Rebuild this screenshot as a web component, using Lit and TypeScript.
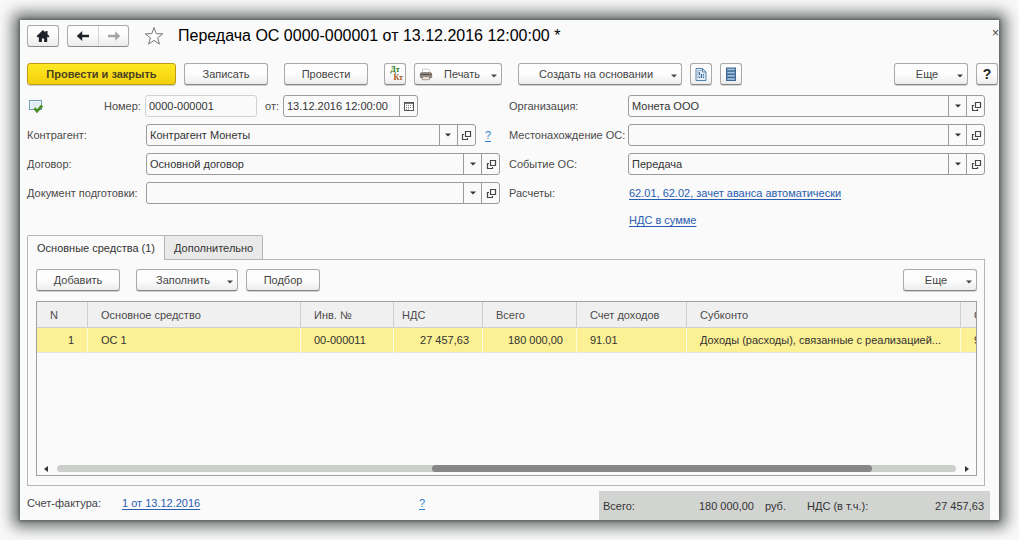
import { LitElement, html, css, svg, nothing } from "lit";
import { customElement, property } from "lit/decorators.js";

const caret = html`<svg class="caret" viewBox="0 0 6 4" width="6" height="4" aria-hidden="true"><path d="M0 .5h6L3 3.5z" fill="currentColor"/></svg>`;

const icons = {
  home: svg`<path d="M8 2 1.500 8.200 2.800 9.500l1-.8V14h3.100v-3.600h2.200V14h3.100V8.700l1 .8 1.300-1.300-2-2V3h-2v1.500z" fill="#1f2229"/>`,
  back: svg`<path d="M1.800 8l5.400-5v3.700H14v2.600H7.200V13z" fill="#1f2229"/>`,
  forward: svg`<path d="M14.200 8 9.200 3.200v3.600H2v2.400h7.200v3.600z" fill="#a5a5a5"/>`,
  printer: svg`<path d="M4 7V2.500h7l1.500 1.500V7z" fill="#fff" stroke="#a9b6c2" stroke-width=".8"/><rect x="1.500" y="6.500" width="13" height="6" rx="1.500" fill="#8f8a88" stroke="#625d5b" stroke-width=".8"/><path d="M2 8.500h12" stroke="#4a4545"/><path d="M4 11h8v3.500H4z" fill="#eee3d6" stroke="#8b7d72" stroke-width=".8"/><path d="M11.500 7.600h2" stroke="#e98a3a"/>`,
  report: svg`<path d="M3 2.500h6.500L13 6v8.500H3z" fill="#e6eff7" stroke="#5583ab"/><path d="M5 12.500V4.500h4" fill="none" stroke="#8fb0cc"/><path d="M9.500 2.500V6H13" fill="none" stroke="#5583ab"/><path d="M6.500 6v3m0 1.500v1.500M8.500 8v4m2-4v1.500m0 1v1.500" stroke="#3d6c98" stroke-width="1.200"/>`,
  list: svg`<rect x="3.500" y="2" width="9" height="12.500" fill="#7fa7cd" stroke="#3f6890"/><path d="M4 5h8M4 8.200h8M4 11.400h8" stroke="#2f567c"/><path d="M5 3.500h6M5 6.600h6M5 9.800h6M5 13h6" stroke="#a9c8e4"/>`,
  calendar: svg`<rect x="3.500" y="4.500" width="9" height="8" fill="#fff" stroke="#555"/><path d="M4 5.500h8" stroke="#777"/><path d="M5 7.500h6.500M5 9.500h6.500M5 11.200h4" stroke="#777" stroke-dasharray="1 1"/>`,
  open: svg`<path d="M7.500 4.500h5v5h-5z" fill="none" stroke="#444" stroke-width="1.200"/><path d="M6 7.500H4.500v5H9.500v-1.500" fill="none" stroke="#444" stroke-width="1.200"/>`,
  posted: svg`<rect x="1.500" y="2.500" width="12" height="9" fill="#f3f9fc" stroke="#6d9fb8"/><path d="M3 5h9M3 7h9M3 9h5" stroke="#c3dae6" stroke-width=".8"/><path d="M6.500 10.200 9 13.200l5.200-5.700" fill="none" stroke="#4a8c28" stroke-width="2.600"/>`,
  star: svg`<path d="M8 1.200l1.750 4.950 5.250.1-4.150 3.200 1.500 5L8 11.500l-4.350 2.950 1.500-5L1 6.250l5.250-.1z" fill="#fff" stroke="#777" stroke-width=".8"/>`,
};

const icon = (name: keyof typeof icons, size = 16) =>
  html`<svg viewBox="0 0 16 16" width=${size} height=${size} aria-hidden="true">${icons[name]}</svg>`;

const controls = css`
  * { box-sizing: border-box; }
  svg { display: block; flex: none; }
  button, input { font: inherit; color: inherit; margin: 0; }
  a { color: #2a5db0; text-underline-offset: 2px; }
`;

@customElement("tool-button")
class ToolButton extends LitElement {
  @property() label = "";
  @property({ type: Boolean }) menu = false;
  @property({ type: Boolean }) primary = false;
  @property({ type: Boolean }) square = false;

  static styles = [controls, css`
    :host { display: block; }
    button {
      display: flex; align-items: center; justify-content: center; gap: 2px;
      height: 22px; width: 100%; padding: 0 4px;
      border: 1px solid #a9a9a9; border-bottom-color: #858585; border-radius: 3px;
      background: linear-gradient(#fdfdfd 50%, #ececec);
      box-shadow: 0 1px 0 #d0d0d0; color: #444; white-space: nowrap;
    }
    .text { flex: 1; text-align: center; }
    .primary { background: linear-gradient(#ffe924, #f2d00c); border-color: #bb9d12; color: #4a4220; font-weight: bold; }
    .square { padding: 0; }
    .caret { margin-top: 3px; }
  `];

  render() {
    return html`<button class="${this.primary ? "primary" : ""} ${this.square ? "square" : ""}" aria-label=${this.label || nothing}>
      <slot name="icon"></slot>
      ${this.square ? html`<slot></slot>` : html`<span class="text"><slot></slot></span>`}
      ${this.menu ? caret : nothing}
    </button>`;
  }
}

@customElement("ref-field")
class RefField extends LitElement {
  @property() label = "";
  @property() value = "";
  @property() kind: "ref" | "date" | "plain" = "ref";
  @property({ type: Boolean }) fit = false;

  static styles = [controls, css`
    :host { display: flex; align-items: center; min-width: 0; color: #333; }
    label { flex: none; width: 119px; color: #4a4a4a; white-space: nowrap; }
    .short { width: auto; margin-right: 4px; }
    .box {
      display: flex; flex: 1; min-width: 0; height: 22px;
      border: 1px solid #9c9c9c; border-radius: 3px; overflow: hidden; background: #fafafa;
    }
    .plain { border-color: #d2d2d2; }
    input { flex: 1; min-width: 0; width: 0; border: 0; padding: 0 3px; background: none; outline: none; }
    button {
      display: flex; align-items: center; justify-content: center;
      width: 18px; padding: 0; border: 0; border-left: 1px solid #9c9c9c; background: none;
    }
  `];

  render() {
    return html`
      <label for="value" class=${this.fit ? "short" : ""}>${this.label}</label>
      <div class="box ${this.kind}">
        <input id="value" .value=${this.value} ?readonly=${this.kind === "plain"} />
        ${this.kind === "ref" ? html`
          <button aria-label="Выбрать">${caret}</button>
          <button aria-label="Открыть">${icon("open")}</button>` : nothing}
        ${this.kind === "date" ? html`<button aria-label="Календарь">${icon("calendar")}</button>` : nothing}
      </div>`;
  }
}

interface Column { title: string; width: number; value: string; cls?: string }

const columns: Column[] = [
  { title: "N", width: 51, value: "1", cls: "num" },
  { title: "Основное средство", width: 213, value: "ОС 1" },
  { title: "Инв. №", width: 93, value: "00-000011" },
  { title: "НДС", width: 89, value: "27 457,63", cls: "num tight" },
  { title: "Всего", width: 94, value: "180 000,00", cls: "num" },
  { title: "Счет доходов", width: 110, value: "91.01" },
  { title: "Субконто", width: 274, value: "Доходы (расходы), связанные с реализацией..." },
  { title: "Счет расходов", width: 111, value: "91.02" },
];

@customElement("asset-table")
class AssetTable extends LitElement {
  static styles = [controls, css`
    :host { display: flex; flex-direction: column; flex: 1; border: 1px solid #a0a0a0; min-width: 0; }
    .view { flex: 1; overflow: hidden; }
    table { width: 100%; border-collapse: separate; border-spacing: 0; table-layout: fixed; }
    th, td { padding: 0 13px; text-align: left; white-space: nowrap; border-right: 1px solid #cfcfcf; }
    th { height: 26px; font-weight: normal; color: #4a4a4a; background: #f0f0f0; border-bottom: 1px solid #cfcfcf; }
    td { height: 25px; color: #333; background: #fbf094; border-right-color: #fffbe0; border-bottom: 1px solid #e4e4e4; }
    td.num { text-align: right; }
    th.tight { padding-left: 8px; }
    .scroll { display: flex; align-items: center; gap: 9px; padding: 0 7px 2px; height: 11px; }
    .scroll button { display: flex; border: 0; padding: 0; background: none; width: 4px; }
    .track { flex: 1; height: 7px; border-radius: 4px; background: #cdcfcd; }
    .thumb { width: 49%; height: 7px; margin-left: 41.7%; border-radius: 4px; background: #868786; }
  `];

  render() {
    return html`
      <div class="view">
        <table>
          <colgroup>${columns.map(c => html`<col style="width:${c.width}px">`)}</colgroup>
          <thead><tr>${columns.map(c => html`<th scope="col" class=${c.cls ?? ""}>${c.title}</th>`)}</tr></thead>
          <tbody><tr>${columns.map(c => html`<td class=${c.cls ?? ""}>${c.value}</td>`)}</tr></tbody>
        </table>
      </div>
      <div class="scroll">
        <button aria-label="Влево"><svg viewBox="0 0 4 6" width="4" height="6"><path d="M4 0v6L0 3z" fill="#333"/></svg></button>
        <div class="track"><div class="thumb"></div></div>
        <button aria-label="Вправо"><svg viewBox="0 0 4 6" width="4" height="6"><path d="M0 0v6l4-3z" fill="#333"/></svg></button>
      </div>`;
  }
}

@customElement("app-root")
class AppRoot extends LitElement {
  static styles = [controls, css`
    :host {
      display: flex; min-height: 100vh; padding: 20px; background: #fafafa; box-sizing: border-box;
      font: 11px/14px "Liberation Sans", Arial, sans-serif; color: #444;
    }
    .window {
      flex: 1; min-width: 0; display: flex; flex-direction: column; padding: 5px 0 0 7px; background: #fafafa;
      box-shadow: 0 0 3px 1px rgba(70, 76, 74, .7), 0 0 14px 7px rgba(70, 76, 74, .8);
    }
    .head { display: flex; align-items: center; height: 22px; gap: 8px; }
    .frame {
      display: flex; height: 22px; border: 1px solid #a9a9a9; border-bottom-color: #858585; border-radius: 3px;
      background: linear-gradient(#fdfdfd 40%, #ececec);
    }
    .frame button { display: flex; align-items: center; justify-content: center; width: 30px; padding: 0; border: 0; background: none; }
    .frame button + button { border-left: 1px solid #d4d4d4; }
    .fav { display: flex; border: 0; padding: 0; background: none; margin: 0 6px 0 7px; }
    h1 { flex: 1; margin: 0; font-size: 16px; line-height: 22px; font-weight: normal; color: #000; white-space: nowrap; }
    .close { align-self: flex-start; border: 0; padding: 0; background: none; line-height: 16px; font-size: 12px; }
    .bar { display: flex; align-items: center; gap: 8px; }
    .main { margin-top: 16px; padding-right: 1px; }
    .gap { margin-left: 8px; }
    .end { margin-left: auto; }
    .w-wide { width: 164px; }
    .w-primary { width: 149px; }
    .w-m { width: 84px; }
    .w-print { width: 88px; }
    .w-fill { width: 102px; }
    .w-s { width: 74px; }
    .w-i { width: 22px; }
    .dtkt { display: flex; flex-direction: column; width: 16px; font: bold 8px/8px "Liberation Serif", "Times New Roman", serif; }
    .dt { color: #2c7a1d; }
    .kt { color: #a8581c; text-align: right; }
    .q { font-size: 14px; font-weight: bold; color: #222; }
    .form { display: grid; grid-template-columns: 473fr 476fr; gap: 9px; margin: 10px 14px 0 0; }
    .col { display: flex; flex-direction: column; gap: 7px; min-width: 0; }
    .row { display: flex; align-items: center; height: 22px; }
    .row ref-field { flex: 1; }
    .state { width: 77px; padding-left: 1px; }
    .row .number { flex: none; width: 153px; }
    .row .date { flex: none; width: 153px; margin-left: 8px; }
    .hint { margin: 0 9px; color: #2f7fd0; }
    .caption { width: 120px; color: #4a4a4a; }
    .links { margin-top: -2px; padding-left: 120px; }
    .tabs { display: flex; margin-top: 4px; }
    .tab { height: 25px; padding: 0 9px; border: 1px solid #b5b5b5; border-bottom: 0; background: #e9e9e9; color: #333; }
    .tab + .tab { border-left: 0; border-bottom: 1px solid #b5b5b5; border-radius: 0 2px 0 0; }
    .active { background: #fafafa; border-radius: 2px 0 0 0; }
    .rest { flex: 1; border-bottom: 1px solid #b5b5b5; margin-right: 14px; }
    .panel {
      flex: 1; display: flex; flex-direction: column; gap: 10px; min-width: 0;
      margin-right: 14px; padding: 9px 7px 9px 8px; border: 1px solid #b5b5b5; border-top: 0;
    }
    .foot { display: flex; align-items: center; margin-top: 5px; padding-right: 9px; height: 29px; }
    .invoice { width: 95px; }
    .invoice-link { width: 297px; }
    .foot-left { display: flex; flex: 1; align-self: flex-start; padding-top: 5px; }
    .foot-left .hint { margin: 0; }
    .totals { display: flex; align-items: center; width: 391px; height: 29px; padding: 0 6px 0 4px; background: #d2d4d2; color: #333; }
    .pair { display: flex; justify-content: space-between; width: 151px; }
    .unit { width: 53px; padding-left: 11px; }
    .rest-pair { flex: 1; }
  `];

  render() {
    return html`
      <main class="window">
        <header class="head">
          <div class="frame"><button aria-label="Домой">${icon("home")}</button></div>
          <div class="frame"><button aria-label="Назад">${icon("back")}</button><button aria-label="Вперед" disabled>${icon("forward")}</button></div>
          <button class="fav" aria-label="В избранное">${icon("star", 20)}</button>
          <h1>Передача ОС 0000-000001 от 13.12.2016 12:00:00 *</h1>
          <button class="close" aria-label="Закрыть">×</button>
        </header>

        <div class="bar main">
          <tool-button class="w-primary" primary>Провести и закрыть</tool-button>
          <tool-button class="w-m">Записать</tool-button>
          <tool-button class="w-m gap">Провести</tool-button>
          <tool-button class="w-i gap" square><span class="dtkt"><span class="dt">Дт</span><span class="kt">Кт</span></span></tool-button>
          <tool-button class="w-print" menu><span slot="icon">${icon("printer", 14)}</span>Печать</tool-button>
          <tool-button class="w-wide gap" menu>Создать на основании</tool-button>
          <tool-button class="w-i" square label="Отчет">${icon("report")}</tool-button>
          <tool-button class="w-i" square label="Список">${icon("list")}</tool-button>
          <tool-button class="w-s end" menu>Еще</tool-button>
          <tool-button class="w-i" square><span class="q">?</span></tool-button>
        </div>

        <section class="form">
          <div class="col">
            <div class="row">
              <span class="state">${icon("posted")}</span>
              <ref-field class="number" fit kind="plain" label="Номер:" value="0000-000001"></ref-field>
              <ref-field class="date" fit kind="date" label="от:" value="13.12.2016 12:00:00"></ref-field>
            </div>
            <div class="row">
              <ref-field label="Контрагент:" value="Контрагент Монеты"></ref-field>
              <a class="hint" href="#">?</a>
            </div>
            <div class="row"><ref-field label="Договор:" value="Основной договор"></ref-field></div>
            <div class="row"><ref-field label="Документ подготовки:"></ref-field></div>
          </div>
          <div class="col">
            <div class="row"><ref-field label="Организация:" value="Монета ООО"></ref-field></div>
            <div class="row"><ref-field label="Местонахождение ОС:"></ref-field></div>
            <div class="row"><ref-field label="Событие ОС:" value="Передача"></ref-field></div>
            <div class="row"><span class="caption">Расчеты:</span><a href="#">62.01, 62.02, зачет аванса автоматически</a></div>
            <div class="row links"><a href="#">НДС в сумме</a></div>
          </div>
        </section>

        <div class="tabs" role="tablist">
          <button class="tab active" role="tab" aria-selected="true">Основные средства (1)</button>
          <button class="tab" role="tab" aria-selected="false">Дополнительно</button>
          <span class="rest"></span>
        </div>
        <section class="panel">
          <div class="bar">
            <tool-button class="w-m">Добавить</tool-button>
            <tool-button class="w-fill gap" menu>Заполнить</tool-button>
            <tool-button class="w-s">Подбор</tool-button>
            <tool-button class="w-s end" menu>Еще</tool-button>
          </div>
          <asset-table></asset-table>
        </section>

        <footer class="foot">
          <div class="foot-left">
            <span class="invoice">Счет-фактура:</span>
            <span class="invoice-link"><a href="#">1 от 13.12.2016</a></span>
            <a class="hint" href="#">?</a>
          </div>
          <div class="totals">
            <span class="pair"><span>Всего:</span><span>180 000,00</span></span>
            <span class="unit">руб.</span>
            <span class="pair rest-pair"><span>НДС (в т.ч.):</span><span>27 457,63</span></span>
          </div>
        </footer>
      </main>`;
  }
}
